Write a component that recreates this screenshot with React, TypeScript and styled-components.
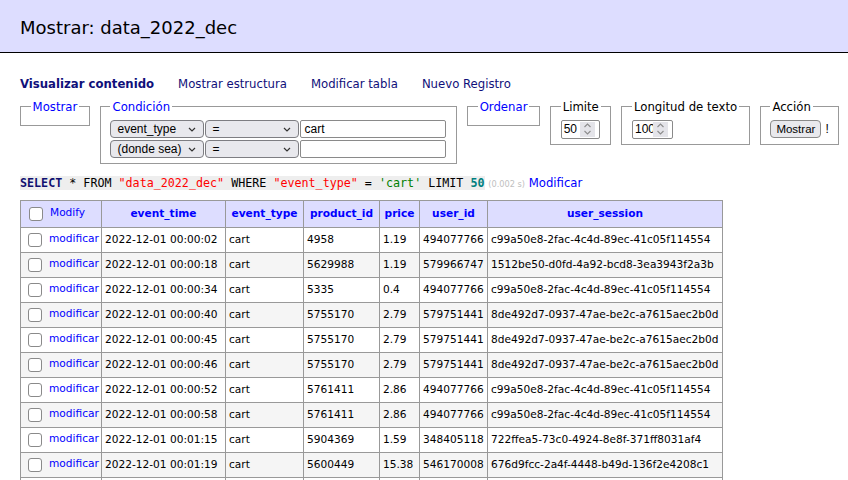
import React from 'react';
import styled, { createGlobalStyle } from 'styled-components';

const GlobalStyle = createGlobalStyle`
    html, body {
        margin: 0;
        padding: 0;
        background: #fff;
    }
    body {
        width: 848px;
        height: 480px;
        overflow: hidden;
        color: #000;
        font: 11.7px/1.25 "DejaVu Sans", Verdana, sans-serif;
    }
    a {
        text-decoration: none;
    }
`;

type Row = [string, string, string, string, string, string];

const rows: Row[] = [
    ['2022-12-01 00:00:02', 'cart', '4958', '1.19', '494077766', 'c99a50e8-2fac-4c4d-89ec-41c05f114554'],
    ['2022-12-01 00:00:18', 'cart', '5629988', '1.19', '579966747', '1512be50-d0fd-4a92-bcd8-3ea3943f2a3b'],
    ['2022-12-01 00:00:34', 'cart', '5335', '0.4', '494077766', 'c99a50e8-2fac-4c4d-89ec-41c05f114554'],
    ['2022-12-01 00:00:40', 'cart', '5755170', '2.79', '579751441', '8de492d7-0937-47ae-be2c-a7615aec2b0d'],
    ['2022-12-01 00:00:45', 'cart', '5755170', '2.79', '579751441', '8de492d7-0937-47ae-be2c-a7615aec2b0d'],
    ['2022-12-01 00:00:46', 'cart', '5755170', '2.79', '579751441', '8de492d7-0937-47ae-be2c-a7615aec2b0d'],
    ['2022-12-01 00:00:52', 'cart', '5761411', '2.86', '494077766', 'c99a50e8-2fac-4c4d-89ec-41c05f114554'],
    ['2022-12-01 00:00:58', 'cart', '5761411', '2.86', '494077766', 'c99a50e8-2fac-4c4d-89ec-41c05f114554'],
    ['2022-12-01 00:01:15', 'cart', '5904369', '1.59', '348405118', '722ffea5-73c0-4924-8e8f-371ff8031af4'],
    ['2022-12-01 00:01:19', 'cart', '5600449', '15.38', '546170008', '676d9fcc-2a4f-4448-b49d-136f2e4208c1'],
    ['2022-12-01 00:01:27', 'cart', '5600449', '15.38', '546170008', '676d9fcc-2a4f-4448-b49d-136f2e4208c1'],
];

const columns: { name: string; width: number }[] = [
    { name: 'event_time', width: 124 },
    { name: 'event_type', width: 78 },
    { name: 'product_id', width: 76 },
    { name: 'price', width: 40 },
    { name: 'user_id', width: 68 },
    { name: 'user_session', width: 235 },
];

const Chevron = () => (
    <svg width="8" height="5" viewBox="0 0 8 5">
        <path d="M1 1 L4 4 L7 1" fill="none" stroke="#333" strokeWidth="1.2" />
    </svg>
);

const SpinIcon = () => (
    <svg width="9" height="14" viewBox="0 0 9 14">
        <path d="M1.5 5 L4.5 2 L7.5 5" fill="none" stroke="#8c8c8c" strokeWidth="1.1" />
        <path d="M1.5 9 L4.5 12 L7.5 9" fill="none" stroke="#8c8c8c" strokeWidth="1.1" />
    </svg>
);

const Select: React.FC<{ value: string; width: number }> = ({ value, width }) => (
    <SelectBox $w={width}>
        <span>{value}</span>
        <ChevronSlot>
            <Chevron />
        </ChevronSlot>
    </SelectBox>
);

const NumberInput: React.FC<{ value: string; width: number }> = ({ value, width }) => (
    <NumberBox $w={width}>
        {value}
        <Spinner>
            <SpinIcon />
        </Spinner>
    </NumberBox>
);

const App: React.FC = () => {
    return (
        <>
            <GlobalStyle />
            <Title>Mostrar: data_2022_dec</Title>
            <Content>
                <Links>
                    <NavLink $active>Visualizar contenido</NavLink>
                    <NavLink>Mostrar estructura</NavLink>
                    <NavLink>Modificar tabla</NavLink>
                    <NavLink>Nuevo Registro</NavLink>
                </Links>

                <Filters>
                    <Fieldset>
                        <Legend><LegendLink>Mostrar</LegendLink></Legend>
                    </Fieldset>
                    <Fieldset>
                        <Legend><LegendLink>Condición</LegendLink></Legend>
                        <WhereGrid>
                            <Select value="event_type" width={94} />
                            <Select value="=" width={94} />
                            <TextInput>cart</TextInput>
                            <Select value="(donde sea)" width={94} />
                            <Select value="=" width={94} />
                            <TextInput />
                        </WhereGrid>
                    </Fieldset>
                    <Fieldset>
                        <Legend><LegendLink>Ordenar</LegendLink></Legend>
                    </Fieldset>
                    <Fieldset>
                        <Legend>Limite</Legend>
                        <NumberInput value="50" width={39} />
                    </Fieldset>
                    <Fieldset>
                        <Legend>Longitud de texto</Legend>
                        <NumberInput value="100" width={41} />
                    </Fieldset>
                    <Fieldset>
                        <Legend>Acción</Legend>
                        <ActionRow>
                            <Button>Mostrar</Button>
                            <span>!</span>
                        </ActionRow>
                    </Fieldset>
                </Filters>

                <Query>
                    <Code>
                        <Keyword>SELECT</Keyword> * FROM <Ident>"data_2022_dec"</Ident> WHERE{' '}
                        <Ident>"event_type"</Ident> = <Str>'cart'</Str> LIMIT <Num>50</Num>
                    </Code>{' '}
                    <Time>(0.002 s)</Time> <PlainLink>Modificar</PlainLink>
                </Query>

                <Table>
                    <colgroup>
                        <col style={{ width: 81 }} />
                        {columns.map(c => (
                            <col key={c.name} style={{ width: c.width }} />
                        ))}
                    </colgroup>
                    <thead>
                        <tr>
                            <HeadCell $left>
                                <CheckCell>
                                    <Check type="checkbox" />
                                    <ModifyLink>Modify</ModifyLink>
                                </CheckCell>
                            </HeadCell>
                            {columns.map(c => (
                                <HeadCell key={c.name}>
                                    <HeadLink>{c.name}</HeadLink>
                                </HeadCell>
                            ))}
                        </tr>
                    </thead>
                    <tbody>
                        {rows.map((r, i) => (
                            <BodyRow key={i} $odd={i % 2 === 1}>
                                <Cell>
                                    <CheckCell>
                                        <Check type="checkbox" />
                                        <ModifyLink>modificar</ModifyLink>
                                    </CheckCell>
                                </Cell>
                                {r.map((v, j) => (
                                    <Cell key={j}>{v}</Cell>
                                ))}
                            </BodyRow>
                        ))}
                    </tbody>
                </Table>
            </Content>
        </>
    );
};

export default App;

const Title = styled.h2`
    margin: 0;
    padding: 17px 20px 14px;
    font-size: 18px;
    line-height: 21px;
    font-weight: normal;
    background: #ddf;
    border-bottom: 1px solid #000;
`;

const Content = styled.div`
    padding-left: 20px;
`;

const Links = styled.div`
    display: flex;
    margin-top: 24px;
`;

const NavLink = styled.a<{ $active?: boolean }>`
    margin-right: 24px;
    white-space: nowrap;
    color: #10107a;
    font-weight: ${p => (p.$active ? 'bold' : 'normal')};
`;

const Filters = styled.div`
    display: flex;
    align-items: flex-start;
    gap: 10px;
    margin-top: 8px;
`;

const Fieldset = styled.fieldset`
    margin: 0;
    padding: 5.6px 9.6px;
    border: 1px solid #999;
    min-width: 0;
`;

const Legend = styled.legend`
    padding: 0 2px;
`;

const LegendLink = styled.a`
    color: #0000ff;
`;

const WhereGrid = styled.div`
    display: grid;
    grid-template-columns: 94px 94px 146px;
    column-gap: 1px;
    row-gap: 2px;
`;

const SelectBox = styled.div<{ $w: number }>`
    position: relative;
    display: flex;
    align-items: center;
    box-sizing: border-box;
    width: ${p => p.$w}px;
    height: 18px;
    padding-left: 6px;
    border: 1px solid #7d7d82;
    border-radius: 4px;
    background: #e8e8ed;
    font: 12px "Liberation Sans", Arial, sans-serif;
`;

const ChevronSlot = styled.span`
    position: absolute;
    right: 7px;
    top: 6px;
    display: flex;
`;

const TextInput = styled.div`
    box-sizing: border-box;
    height: 18px;
    padding-left: 3px;
    border: 1px solid #8a8a8a;
    border-radius: 2px;
    background: #fff;
    font: 12px/16px "Liberation Sans", Arial, sans-serif;
`;

const NumberBox = styled.div<{ $w: number }>`
    position: relative;
    box-sizing: border-box;
    width: ${p => p.$w}px;
    height: 19px;
    padding-left: 2px;
    border: 1px solid #8a8a8a;
    border-radius: 2px;
    background: #fff;
    overflow: hidden;
    white-space: nowrap;
    font: 12px/17px "Liberation Sans", Arial, sans-serif;
`;

const Spinner = styled.span`
    position: absolute;
    right: 4px;
    top: 1px;
    bottom: 1px;
    width: 15px;
    display: flex;
    align-items: center;
    justify-content: center;
    background: #e4e4e9;
`;

const ActionRow = styled.div`
    display: flex;
    align-items: center;
    gap: 4px;
    height: 19px;
    font: 12px "Liberation Sans", Arial, sans-serif;
`;

const Button = styled.button`
    box-sizing: border-box;
    height: 18px;
    padding: 0 5px;
    border: 1px solid #8a8a8a;
    border-radius: 4px;
    background: #e9e9ed;
    color: #000;
    font: 11.5px "Liberation Sans", Arial, sans-serif;
`;

const Query = styled.p`
    margin: 12px 0 0;
    white-space: nowrap;
`;

const Code = styled.code`
    background: #eee;
    font: 11.7px "DejaVu Sans Mono", monospace;
`;

const Keyword = styled.b`
    color: #101070;
`;

const Ident = styled.span`
    color: #ff0000;
`;

const Str = styled.span`
    color: #008000;
`;

const Num = styled.b`
    color: #007f7f;
`;

const Time = styled.span`
    color: silver;
    font-size: 8.2px;
`;

const PlainLink = styled.a`
    color: #0000ff;
`;

const Table = styled.table`
    margin-top: 9px;
    width: 702px;
    table-layout: fixed;
    border-collapse: collapse;
    font-size: 10.6px;
`;

const HeadCell = styled.th<{ $left?: boolean }>`
    height: 26px;
    padding: 0 4px;
    border: 1px solid #999;
    background: #ddf;
    text-align: ${p => (p.$left ? 'left' : 'center')};
    white-space: nowrap;
    overflow: hidden;
`;

const HeadLink = styled.a`
    color: #0000ff;
    font-weight: bold;
`;

const BodyRow = styled.tr<{ $odd: boolean }>`
    background: ${p => (p.$odd ? '#f5f5f5' : '#fff')};
`;

const Cell = styled.td`
    height: 24px;
    padding: 0 3px;
    border: 1px solid #999;
    white-space: nowrap;
    overflow: hidden;
`;

const CheckCell = styled.div`
    display: flex;
    align-items: center;
    gap: 7px;
    padding-left: 4px;
    font-weight: normal;
`;

const Check = styled.input`
    appearance: none;
    box-sizing: border-box;
    width: 14px;
    height: 14px;
    margin: 0;
    border: 1.5px solid #8a8a8a;
    border-radius: 3px;
    background: #fff;
    flex: none;
`;

const ModifyLink = styled.a`
    color: #0000ff;
    margin-top: -2px;
`;
